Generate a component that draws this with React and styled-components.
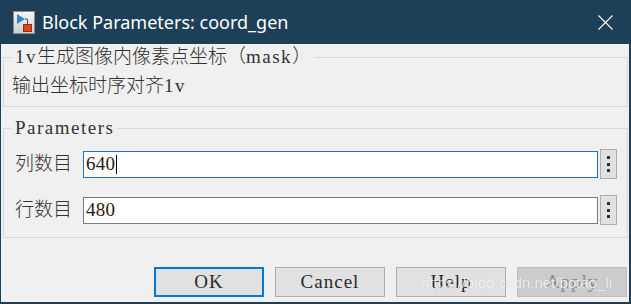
import React from "react";
import styled, { createGlobalStyle } from "styled-components";

const NAVY = "#1d3f58";
const MIXED = `"Liberation Serif", "Noto Sans CJK SC", serif`;

const Global = createGlobalStyle`
  html, body { margin: 0; padding: 0; background: #f0f0f0; }
  body { width: 631px; height: 304px; overflow: hidden; }
`;

const Window = styled.div`
  position: relative;
  box-sizing: border-box;
  width: 631px;
  height: 304px;
  border-left: 1px solid ${NAVY};
  border-right: 2px solid ${NAVY};
  border-bottom: 2px solid ${NAVY};
  background: #f0f0f0;
  display: flex;
  flex-direction: column;
  overflow: hidden;
`;

const TitleBar = styled.div`
  height: 44px;
  flex: none;
  background: ${NAVY};
  display: flex;
  align-items: center;
  padding: 0 16px 0 12px;
  box-sizing: border-box;
`;

const TitleText = styled.div`
  margin-left: 7px;
  font-family: "Noto Sans", "Open Sans", sans-serif;
  font-size: 18px;
  color: #ffffff;
  line-height: 24px;
`;

const CloseBox = styled.div`
  margin-left: auto;
  width: 15px;
  height: 15px;
  display: flex;
`;

const Body = styled.div`
  padding: 2px 1px 0 2px;
  display: flex;
  flex-direction: column;
`;

const Group = styled.fieldset`
  margin: ${(p) => (p.$gapTop ? `${p.$gapTop}px` : "0")} 0 0 0;
  padding: ${(p) => p.$pad};
  border: 1px solid #d9d9d9;
  min-width: 0;
`;

const Legend = styled.legend`
  padding: 0 3px;
  font-family: ${MIXED};
  font-size: 19px;
  font-weight: 300;
  line-height: 22px;
  color: #333333;
  letter-spacing: ${(p) => p.$spacing || 0}px;
`;

const Latin = styled.span`
  letter-spacing: ${(p) => p.$spacing ?? 1}px;
`;

const Caption = styled.div`
  font-family: ${MIXED};
  font-size: 19px;
  font-weight: 300;
  line-height: 22px;
  color: #333333;
`;

const Rows = styled.div`
  display: flex;
  flex-direction: column;
  gap: 16px;
`;

const Row = styled.div`
  display: grid;
  grid-template-columns: 69px 1fr 17px;
  column-gap: 2px;
  height: 30px;
  align-items: center;
`;

const Label = styled.div`
  padding-left: 3px;
  font-family: ${MIXED};
  font-size: 19px;
  font-weight: 300;
  line-height: 22px;
  color: #333333;
`;

const Field = styled.div`
  box-sizing: border-box;
  height: 27px;
  background: #ffffff;
  border: 1px solid ${(p) => (p.$focused ? "#1a74c8" : "#7a7a7a")};
  padding-left: 2px;
  display: flex;
  align-items: center;
  font-family: "Liberation Serif", serif;
  font-size: 19px;
  letter-spacing: 0.2px;
  color: #2a1818;
`;

const Caret = styled.span`
  width: 1px;
  height: 19px;
  background: #000;
  margin-left: 1px;
`;

const DotsButton = styled.div`
  box-sizing: border-box;
  height: 30px;
  background: #e1e1e1;
  border: 1px solid #adadad;
  display: flex;
  flex-direction: column;
  align-items: center;
  justify-content: center;
  gap: 3.5px;
`;

const Dot = styled.span`
  width: 3px;
  height: 3px;
  background: #2a2a2a;
  border-radius: 0.5px;
`;

const ButtonRow = styled.div`
  margin-top: 29px;
  margin-right: 1px;
  display: flex;
  justify-content: flex-end;
  gap: 11px;
`;

const Button = styled.div`
  box-sizing: border-box;
  width: 110px;
  height: 30px;
  display: flex;
  align-items: center;
  justify-content: center;
  background: ${(p) => (p.$disabled ? "#cccccc" : "#e1e1e1")};
  border: ${(p) =>
    p.$primary ? "2px solid #0078d7" : p.$disabled ? "1px solid #bfbfbf" : "1px solid #adadad"};
  font-family: "Liberation Serif", serif;
  font-size: 19px;
  letter-spacing: 1px;
  color: ${(p) => (p.$disabled ? "#8a8a8a" : "#2a2a2a")};
`;

const Watermark = styled.div`
  position: absolute;
  left: 420px;
  top: 274px;
  font-family: "Liberation Sans", Arial, sans-serif;
  font-size: 15px;
  line-height: 18px;
  color: rgba(255, 255, 255, 0.78);
  text-shadow: 0 0 1px rgba(120, 120, 120, 0.35);
  pointer-events: none;
`;

function BlockIcon() {
  return (
    <svg width="22" height="23" viewBox="0 0 22 23">
      <defs>
        <linearGradient id="ig" x1="0" y1="0" x2="0" y2="1">
          <stop offset="0" stopColor="#f6f6f6" />
          <stop offset="1" stopColor="#cdcdcd" />
        </linearGradient>
      </defs>
      <rect x="0.5" y="0.5" width="21" height="22" fill="url(#ig)" stroke="#8c8c8c" />
      <path d="M4 3 L12 8 L4 13 Z" fill="#2f86d4" />
      <path d="M12 8 H14.5 V13" stroke="#5a5a5a" fill="none" />
      <rect x="10.5" y="13.5" width="8" height="7" fill="#d8461a" stroke="#9e2c0c" />
    </svg>
  );
}

function CloseIcon() {
  return (
    <svg width="15" height="15" viewBox="0 0 15 15">
      <path d="M0.5 0.5 L14.5 14.5 M14.5 0.5 L0.5 14.5" stroke="#ffffff" strokeWidth="1.1" />
    </svg>
  );
}

function ParamRow({ label, value, focused }) {
  return (
    <Row>
      <Label>{label}</Label>
      <Field $focused={focused}>
        {value}
        {focused && <Caret />}
      </Field>
      <DotsButton>
        <Dot />
        <Dot />
        <Dot />
      </DotsButton>
    </Row>
  );
}

export default function App() {
  return (
    <>
      <Global />
      <Window>
        <TitleBar>
          <BlockIcon />
          <TitleText>Block Parameters: coord_gen</TitleText>
          <CloseBox>
            <CloseIcon />
          </CloseBox>
        </TitleBar>
        <Body>
          <Group $pad="7px 10px 9px 8px">
            <Legend>
              <Latin $spacing={1.5}>1v</Latin>生成图像内像素点坐标（<Latin $spacing={1.5}>mask</Latin>）
            </Legend>
            <Caption>
              输出坐标时序对齐<Latin $spacing={1.5}>1v</Latin>
            </Caption>
          </Group>
          <Group $gapTop={10} $pad="10px 10px 12px 8px">
            <Legend $spacing={1.5}>Parameters</Legend>
            <Rows>
              <ParamRow label="列数目" value="640" focused />
              <ParamRow label="行数目" value="480" />
            </Rows>
          </Group>
          <ButtonRow>
            <Button $primary>OK</Button>
            <Button>Cancel</Button>
            <Button>Help</Button>
            <Button $disabled>Apply</Button>
          </ButtonRow>
        </Body>
        <Watermark>https://blog.csdn.net/botao_li</Watermark>
      </Window>
    </>
  );
}
